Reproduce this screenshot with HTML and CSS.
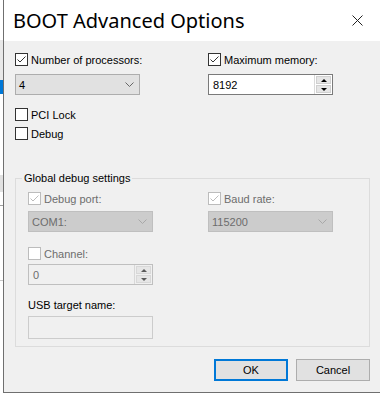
FILE: index.html
```html
<!DOCTYPE html>
<html lang="en">
<head>
    <meta charset="UTF-8">
    <title>BOOT Advanced Options</title>
    <link rel="stylesheet" href="styles.css">
</head>
<body>
<div class="dialog">
    <div class="titlebar">
        <span class="title">BOOT Advanced Options</span>
        <svg class="close" width="11" height="11" viewBox="0 0 11 11">
            <path d="M0.5 0.5 L10.5 10.5 M10.5 0.5 L0.5 10.5" stroke="#222" stroke-width="1" fill="none"/>
        </svg>
    </div>

    <div class="content">
        <div class="pair">
            <div class="col">
                <label class="chk">
                    <span class="box"><svg width="11" height="11" viewBox="0 0 11 11"><path d="M1.5 5.5 L4 8 L9.5 2.5" stroke="#333" fill="none"/></svg></span>
                    Number of processors:
                </label>
                <div class="combo">
                    <span>4</span>
                    <svg class="chev" width="9" height="5" viewBox="0 0 9 5"><path d="M0.5 0.5 L4.5 4.5 L8.5 0.5" stroke="#666" fill="none"/></svg>
                </div>
            </div>
            <div class="col">
                <label class="chk">
                    <span class="box"><svg width="11" height="11" viewBox="0 0 11 11"><path d="M1.5 5.5 L4 8 L9.5 2.5" stroke="#333" fill="none"/></svg></span>
                    Maximum memory:
                </label>
                <div class="spin">
                    <span class="spin-val">8192</span>
                    <div class="spin-btns">
                        <span class="arrow up"></span>
                        <span class="arrow down"></span>
                    </div>
                </div>
            </div>
        </div>

        <label class="chk first-single"><span class="box"></span>PCI Lock</label>
        <label class="chk single"><span class="box"></span>Debug</label>

        <fieldset class="group">
            <legend>Global debug settings</legend>
            <div class="pair">
                <div class="col">
                    <label class="chk disabled">
                        <span class="box"><svg width="11" height="11" viewBox="0 0 11 11"><path d="M1.5 5.5 L4 8 L9.5 2.5" stroke="#bcbcbc" fill="none"/></svg></span>
                        Debug port:
                    </label>
                    <div class="combo disabled">
                        <span>COM1:</span>
                        <svg class="chev" width="9" height="5" viewBox="0 0 9 5"><path d="M0.5 0.5 L4.5 4.5 L8.5 0.5" stroke="#a8a8a8" fill="none"/></svg>
                    </div>
                </div>
                <div class="col">
                    <label class="chk disabled">
                        <span class="box"><svg width="11" height="11" viewBox="0 0 11 11"><path d="M1.5 5.5 L4 8 L9.5 2.5" stroke="#bcbcbc" fill="none"/></svg></span>
                        Baud rate:
                    </label>
                    <div class="combo disabled">
                        <span>115200</span>
                        <svg class="chev" width="9" height="5" viewBox="0 0 9 5"><path d="M0.5 0.5 L4.5 4.5 L8.5 0.5" stroke="#a8a8a8" fill="none"/></svg>
                    </div>
                </div>
            </div>

            <label class="chk disabled channel"><span class="box"></span>Channel:</label>
            <div class="spin disabled">
                <span class="spin-val">0</span>
                <div class="spin-btns">
                    <span class="arrow up"></span>
                    <span class="arrow down"></span>
                </div>
            </div>

            <div class="field-label">USB target name:</div>
            <div class="textbox"></div>
        </fieldset>

        <div class="buttons">
            <button class="btn default">OK</button>
            <button class="btn">Cancel</button>
        </div>
    </div>
</div>
</body>
</html>
```

FILE: styles.css
```css
* {
    margin: 0;
    padding: 0;
    box-sizing: border-box;
}

body {
    width: 380px;
    height: 395px;
    overflow: hidden;
    font-family: "Liberation Sans", Arial, sans-serif;
    font-size: 11px;
    color: #000;
    /* windows peeking out behind the dialog */
    background:
        linear-gradient(to bottom,
            #ffffff 0, #ffffff 40px,
            #e8e8e8 40px, #e8e8e8 80px,
            #0078d7 80px, #0078d7 94px,
            #ffffff 94px, #ffffff 175px,
            #e1e1e1 175px, #e1e1e1 192px,
            #ffffff 192px, #ffffff 205px,
            #a0a0a0 205px, #a0a0a0 206px,
            #ffffff 206px, #ffffff 280px,
            #c8c8c8 280px, #c8c8c8 281px,
            #ffffff 281px);
}

.dialog {
    margin-left: 3px;
    width: 377px;
    height: 393px;
    border-left: 1px solid #6f6f6f;
    border-bottom: 1px solid #6f6f6f;
    background: #f0f0f0;
    display: flex;
    flex-direction: column;
}

.titlebar {
    height: 41px;
    flex-shrink: 0;
    background: #fff;
    display: flex;
    align-items: center;
    justify-content: space-between;
    padding: 0 17px 1px 9px;
}

.title {
    font-family: "Noto Sans", "Open Sans", sans-serif;
    font-size: 20px;
    color: #000;
}

.content {
    flex: 1;
    padding: 11px 10px 0 11px;
    display: flex;
    flex-direction: column;
}

.pair {
    display: grid;
    grid-template-columns: 125px 125px;
    column-gap: 68px;
}

.col {
    display: flex;
    flex-direction: column;
}

/* checkboxes */
.chk {
    display: flex;
    align-items: center;
    gap: 3px;
    height: 15px;
    margin-bottom: 7px;
    white-space: nowrap;
}

.box {
    width: 13px;
    height: 13px;
    border: 1px solid #333;
    background: #fff;
    display: flex;
    align-items: center;
    justify-content: center;
    flex-shrink: 0;
}

.chk.first-single {
    margin-top: 12px;
    margin-bottom: 4px;
}

.chk.single {
    margin-bottom: 0;
}

.chk.disabled {
    color: #6d6d6d;
    margin-bottom: 5px;
}

.chk.disabled .box {
    border-color: #bcbcbc;
}

.chk.channel {
    margin-top: 14px;
    margin-bottom: 3px;
}

/* combo boxes */
.combo {
    height: 21px;
    border: 1px solid #adadad;
    background: #e1e1e1;
    display: flex;
    align-items: center;
    justify-content: space-between;
    padding: 0 5px 0 3px;
}

.combo.disabled {
    background: #cccccc;
    border-color: #bfbfbf;
    color: #6d6d6d;
}

/* spin boxes */
.spin {
    height: 21px;
    display: flex;
    border: 1px solid #7a7a7a;
    background: #fff;
}

.spin-val {
    flex: 1;
    padding: 0 4px;
    display: flex;
    align-items: center;
}

.spin-btns {
    width: 18px;
    display: flex;
    flex-direction: column;
    gap: 1px;
    padding: 1px;
    background: #fff;
    border-left: 1px solid #dadada;
}

.arrow {
    flex: 1;
    background: #e6e6e6;
    border: 1px solid #d0d0d0;
    display: flex;
    align-items: center;
    justify-content: center;
}

.arrow::after {
    content: "";
    border-left: 3px solid transparent;
    border-right: 3px solid transparent;
}

.arrow.up::after {
    border-bottom: 3px solid #000;
}

.arrow.down::after {
    border-top: 3px solid #000;
}

.spin.disabled {
    width: 125px;
    border-color: #bfbfbf;
    background: #f0f0f0;
    color: #6d6d6d;
}

.spin.disabled .spin-btns {
    background: #f0f0f0;
    border-left-color: #d8d8d8;
}

.spin.disabled .arrow {
    background: #e6e6e6;
    border-color: #d8d8d8;
}

.spin.disabled .arrow.up::after {
    border-bottom-color: #5a5a5a;
}

.spin.disabled .arrow.down::after {
    border-top-color: #5a5a5a;
}

/* group box */
.group {
    margin-top: 30px;
    border: 1px solid #dcdcdc;
    padding: 6px 12px 7px 12px;
}

.group legend {
    margin-left: -6px;
    padding: 0 2px;
    line-height: 14px;
}

.group .pair {
    column-gap: 55px;
}

.field-label {
    margin-top: 13px;
    height: 15px;
    line-height: 15px;
}

.textbox {
    margin-top: 3px;
    width: 125px;
    height: 23px;
    border: 1px solid #cccccc;
    background: #f0f0f0;
}

/* dialog buttons */
.buttons {
    margin-top: 12px;
    display: flex;
    justify-content: flex-end;
    gap: 8px;
}

.btn {
    width: 74px;
    height: 22px;
    border: 1px solid #adadad;
    background: #e1e1e1;
    font-family: "Liberation Sans", Arial, sans-serif;
    font-size: 11px;
    color: #000;
}

.btn.default {
    border: 2px solid #0078d7;
}
```
